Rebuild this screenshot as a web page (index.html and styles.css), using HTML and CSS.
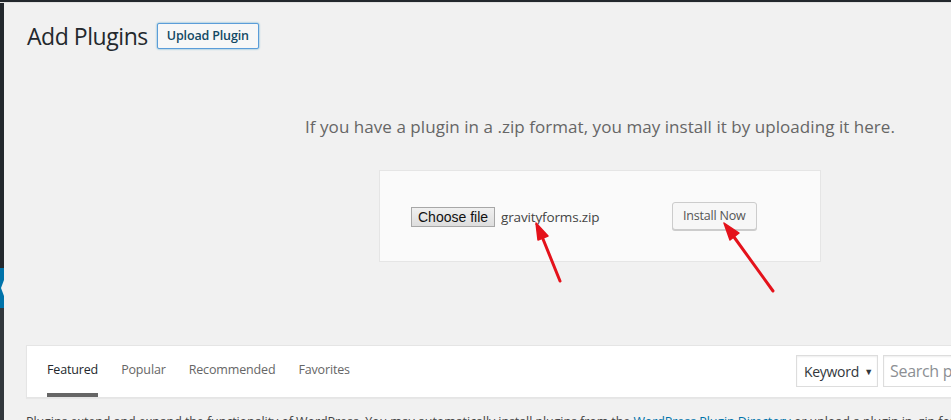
FILE: index.html
```html
<!DOCTYPE html>
<html lang="en">
<head>
<meta charset="utf-8">
<title>Add Plugins</title>
<link rel="stylesheet" href="styles.css">
</head>
<body>
<div class="screen">
  <div class="adminbar-edge"></div>
  <div class="layout">
    <aside class="menu">
      <div class="menu-top"></div>
      <div class="menu-current"></div>
      <div class="menu-sub"></div>
    </aside>
    <main class="content">
      <div class="title-row">
        <h1 class="title">Add Plugins</h1>
        <span class="title-action">Upload Plugin</span>
      </div>
      <div class="upload">
        <p class="install-help">If you have a plugin in a .zip format, you may install it by uploading it here.</p>
        <form class="upload-form">
          <span class="file-input"><span class="file-btn">Choose file</span><span class="file-name">gravityforms.zip</span></span>
          <span class="install-btn">Install Now</span>
        </form>
      </div>
      <div class="filter">
        <ul class="filter-links">
          <li class="tab current">Featured</li>
          <li class="tab">Popular</li>
          <li class="tab">Recommended</li>
          <li class="tab">Favorites</li>
        </ul>
        <div class="search-form">
          <span class="select">Keyword <span class="caret">▼</span></span>
          <span class="search">Search plugins...</span>
        </div>
      </div>
      <p class="intro">Plugins extend and expand the functionality of WordPress. You may automatically install plugins from the <a class="link">WordPress Plugin Directory</a> or upload a plugin in .zip format by clicking the button at the top of this page.</p>
    </main>
  </div>
  <svg class="arrows" width="951" height="420" viewBox="0 0 951 420">
    <g stroke="#e4121b" stroke-width="3" stroke-linecap="round" fill="#e4121b">
      <line x1="560" y1="281" x2="543" y2="239"/>
      <polygon points="536,223 548,236 538,240" stroke-width="1.5" stroke-linejoin="round"/>
      <line x1="773" y1="291" x2="734" y2="237"/>
      <polygon points="724,223 739,233 730,240" stroke-width="1.5" stroke-linejoin="round"/>
    </g>
  </svg>
</div>
</body>
</html>
```

FILE: styles.css
```css
html, body {
  margin: 0;
  padding: 0;
}
body {
  background: #f1f1f1;
  font-family: "Open Sans", "Noto Sans", "Liberation Sans", sans-serif;
  color: #444;
  overflow: hidden;
  width: 951px;
  height: 420px;
}
.screen {
  position: relative;
  width: 951px;
  height: 420px;
  overflow: hidden;
}
.adminbar-edge {
  height: 2px;
  background: #23282d;
  border-bottom: 1px solid #e2e2e2;
}
.layout {
  display: flex;
  align-items: stretch;
  height: 417px;
}
.menu {
  flex: none;
  width: 4px;
  display: flex;
  flex-direction: column;
}
.menu-top {
  height: 265px;
  background: #23282d;
}
.menu-current {
  position: relative;
  height: 40px;
  background: #0073aa;
}
.menu-current::after {
  content: "";
  position: absolute;
  right: 0;
  top: 12px;
  border: 8px solid transparent;
  border-right-color: #f1f1f1;
  border-left-width: 0;
  border-right-width: 3px;
}
.menu-sub {
  flex: 1;
  background: #32373c;
}
.content {
  flex: none;
  width: 1148px;
  padding: 18px 20px 0 22px;
}
.title-row {
  display: flex;
  align-items: center;
  height: 30px;
}
.title {
  margin: 0 0 0 1px;
  font-size: 23px;
  font-weight: 400;
  line-height: 30px;
  color: #23282d;
  letter-spacing: -0.45px;
}
.title-action {
  margin-left: 9px;
  padding: 0 9px;
  height: 24px;
  line-height: 24px;
  border: 1px solid #5b9dd9;
  box-shadow: 0 0 2px rgba(30, 140, 190, 0.8);
  border-radius: 2px;
  background: #f7f7f7;
  color: #124964;
  font-size: 12.5px;
  font-weight: 600;
  letter-spacing: -0.15px;
}
.upload {
  text-align: center;
  padding-top: 64px;
}
.install-help {
  margin: 0;
  font-size: 17px;
  line-height: 24px;
  color: #666;
  letter-spacing: 0.05px;
}
.upload-form {
  display: inline-flex;
  align-items: center;
  margin-top: 31px;
  width: 379px;
  padding: 30px 30px 30px 31px;
  height: 30px;
  border: 1px solid #e5e5e5;
  background: #fafafa;
  text-align: left;
}
.file-input {
  display: flex;
  align-items: center;
  width: 261px;
  padding-top: 2px;
}
.file-btn {
  font-family: "Liberation Sans", Arial, sans-serif;
  font-size: 14px;
  line-height: 18px;
  padding: 0 6px;
  border: 1px solid #a7a7a7;
  background: linear-gradient(#f0f0f0, #dddddd);
  color: #111;
}
.file-name {
  margin-left: 6px;
  font-size: 13.5px;
  color: #444;
  letter-spacing: -0.15px;
}
.install-btn {
  display: inline-block;
  height: 26px;
  line-height: 26px;
  padding: 0 10px;
  border: 1px solid #ccc;
  border-radius: 3px;
  background: #f7f7f7;
  box-shadow: 0 1px 0 #ccc;
  color: #555;
  font-size: 12.5px;
  letter-spacing: -0.2px;
}
.filter {
  display: flex;
  justify-content: space-between;
  margin-top: 83px;
  padding: 0 10px 0 8.5px;
  background: #fff;
  border: 1px solid #e5e5e5;
  box-shadow: 0 1px 1px rgba(0, 0, 0, 0.04);
}
.filter-links {
  display: flex;
  margin: 0;
  padding: 0;
  list-style: none;
}
.tab {
  margin: 0 11.5px;
  padding: 15px 0;
  line-height: 17px;
  font-size: 12.5px;
  color: #666;
  border-bottom: 4px solid #fff;
  letter-spacing: -0.15px;
}
.tab.current {
  color: #23282d;
  border-bottom-color: #666;
}
.search-form {
  display: flex;
  align-items: flex-start;
  gap: 5px;
  padding-top: 9px;
}
.select {
  box-sizing: border-box;
  height: 32px;
  width: 82px;
  padding: 0 7px;
  line-height: 32px;
  border: 1px solid #ddd;
  box-shadow: inset 0 1px 2px rgba(0, 0, 0, 0.07);
  color: #32373c;
  font-size: 14px;
  letter-spacing: -0.3px;
  white-space: nowrap;
}
.caret {
  font-size: 9px;
  margin-left: 2px;
  vertical-align: 2px;
}
.search {
  box-sizing: border-box;
  height: 32px;
  width: 280px;
  padding: 0 6px;
  line-height: 30px;
  border: 1px solid #ddd;
  box-shadow: inset 0 1px 2px rgba(0, 0, 0, 0.07);
  color: #8c8f94;
  font-size: 16px;
  letter-spacing: -0.3px;
}
.intro {
  margin: 14px 0 0;
  font-size: 12.5px;
  line-height: 19px;
  color: #444;
  white-space: nowrap;
  letter-spacing: -0.08px;
}
.link {
  color: #0073aa;
  text-decoration: underline;
}
.arrows {
  position: absolute;
  left: 0;
  top: 0;
  pointer-events: none;
}
```
